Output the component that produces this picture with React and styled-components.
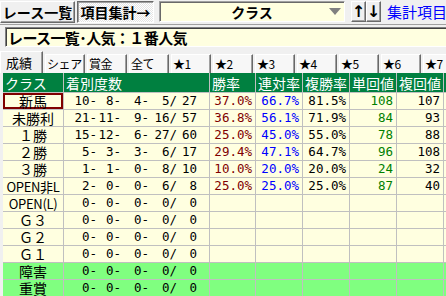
import React from 'react';
import styled, { createGlobalStyle, css } from 'styled-components';

const GlobalStyle = createGlobalStyle`
  html, body { margin: 0; padding: 0; background: #f0f0f0; }
  body { font-family: "Noto Sans CJK JP", sans-serif; }
`;

const CJK = `"Noto Sans CJK JP", "Noto Sans", sans-serif`;
const MONO = `"DejaVu Sans Mono", "Noto Sans CJK JP", monospace`;

const Window = styled.div`
  width: 446px;
  height: 296px;
  overflow: hidden;
  background: #f0f0f0;
  display: flex;
  flex-direction: column;
`;

const Toolbar = styled.div`
  box-sizing: border-box;
  height: 25px;
  padding-top: 1px;
  display: flex;
  align-items: flex-start;
  border-bottom: 1px solid #a0a0a0;
  flex: none;
  white-space: nowrap;
`;

const raised = css`
  border: 1px solid;
  border-color: #ffffff #696969 #696969 #ffffff;
  box-shadow: inset -1px -1px 0 #a0a0a0;
  background: #f0f0f0;
`;

const ToolButton = styled.div`
  box-sizing: border-box;
  flex: none;
  width: ${p => p.$w}px;
  margin-left: ${p => p.$ml || 0}px;
  height: 22px;
  display: flex;
  align-items: center;
  justify-content: center;
  font-family: ${CJK};
  font-weight: 700;
  font-size: 14px;
  line-height: 1;
  color: #000;
  ${raised}
  ${p => p.$pressed && css`
    border-color: #696969 #ffffff #ffffff #696969;
    box-shadow: inset 1px 1px 0 #a0a0a0;
    background: repeating-conic-gradient(#ffffff 0 25%, #e4e4e4 0 50%) 0 0 / 2px 2px;
  `}
`;

const Combo = styled.div`
  box-sizing: border-box;
  flex: none;
  margin-left: 5px;
  width: 186px;
  height: 21px;
  display: flex;
  align-items: center;
  background: #ffffe0;
  border: 1px solid;
  border-color: #a0a0a0 #ffffff #ffffff #a0a0a0;
  box-shadow: inset 1px 1px 0 #696969;
`;

const ComboLabel = styled.span`
  flex: 1;
  padding-left: 15px;
  text-align: center;
  font-family: ${CJK};
  font-weight: 700;
  font-size: 14px;
  line-height: 1;
  color: #000;
`;

const ComboArrow = styled.span`
  flex: none;
  width: 0;
  height: 0;
  margin-right: 3px;
  border-left: 6px solid transparent;
  border-right: 6px solid transparent;
  border-top: 7px solid #808080;
`;

const ArrowButton = styled.div`
  box-sizing: border-box;
  flex: none;
  width: 15px;
  height: 21px;
  margin-left: ${p => p.$ml || 0}px;
  display: flex;
  align-items: center;
  justify-content: center;
  font-family: "DejaVu Sans", sans-serif;
  font-weight: 700;
  font-size: 16px;
  line-height: 1;
  color: #000;
  ${raised}
`;

const MenuLink = styled.span`
  flex: none;
  margin-left: 6px;
  line-height: 21px;
  font-family: ${CJK};
  font-size: 15px;
  color: #0000ff;
`;

const TitleBox = styled.div`
  box-sizing: border-box;
  flex: none;
  margin: 2px 0 0 5px;
  width: 460px;
  height: 20px;
  padding-left: 2px;
  display: flex;
  align-items: center;
  background: #ffffe0;
  border: 1px solid;
  border-color: #808080 #ffffff #ffffff #808080;
  box-shadow: inset 1px 1px 0 #404040;
  font-family: ${CJK};
  font-weight: 700;
  font-size: 15px;
  line-height: 1;
  letter-spacing: -0.6px;
  color: #000;
  white-space: nowrap;
`;

const TabBar = styled.div`
  flex: none;
  margin-top: 4px;
  height: 22px;
  display: flex;
  align-items: flex-end;
  white-space: nowrap;
`;

const Tab = styled.div`
  box-sizing: border-box;
  flex: none;
  width: 40px;
  height: 19px;
  margin-left: 2px;
  padding-left: 1px;
  display: flex;
  align-items: center;
  background: #f7f7f7;
  border: 1px solid;
  border-bottom: none;
  border-color: #ffffff #696969 transparent #ffffff;
  box-shadow: inset -1px 0 0 #a0a0a0;
  font-family: ${CJK};
  font-size: 12px;
  line-height: 1;
  letter-spacing: -0.4px;
  color: #000;
  ${p => p.$active && css`
    width: 43px;
    height: 22px;
    margin-left: 0;
    padding-left: 5px;
    font-size: 13px;
    letter-spacing: 0;
    background: #f0f0f0;
  `}
`;

const Grid = styled.div`
  flex: none;
  margin-left: 3px;
  width: max-content;
  display: grid;
  grid-template-columns: 60px 145px 45px 46px 46px 46px 46px 60px;
  grid-template-rows: 19px;
  grid-auto-rows: 16px;
  gap: 1px;
  background: #c0c0c0;
`;

const HeadCell = styled.div`
  background: #008040;
  color: #ffffff;
  font-family: ${CJK};
  font-size: 14px;
  line-height: 1;
  padding-left: 2px;
  display: flex;
  align-items: center;
  white-space: nowrap;
`;

const Cell = styled.div`
  box-sizing: border-box;
  background: ${p => (p.$tone === 'green' ? '#80ff80' : '#ffffe0')};
  display: flex;
  align-items: center;
  line-height: 1;
  white-space: pre;
`;

const ClassCell = styled(Cell)`
  justify-content: center;
  font-family: ${CJK};
  font-size: ${p => (p.$compact ? 13 : 14)}px;
  letter-spacing: ${p => (p.$compact ? '-0.3px' : '0')};
  color: #000;
  ${p => p.$selected && css`box-shadow: inset 0 0 0 2px #800000;`}
`;

const RecordCell = styled(Cell)`
  font-family: ${MONO};
  font-size: 12.5px;
  color: #000;
`;

const Field = styled.span`
  display: inline-block;
  width: ${p => p.$w}px;
  text-align: right;
`;

const NumCell = styled(Cell)`
  justify-content: flex-end;
  padding-right: 3px;
  font-family: ${MONO};
  font-size: 12.5px;
  color: ${p => p.$color || '#000'};
`;

const FIELD_W = [33, 24, 28, 28, 20];

const rows = [
  { name: '新馬', rec: ['10-', '8-', '4-', '5/', '27'], w: '37.0%', r: '66.7%', f: '81.5%', t: '108', h: '107', sel: true },
  { name: '未勝利', rec: ['21-', '11-', '9-', '16/', '57'], w: '36.8%', r: '56.1%', f: '71.9%', t: '84', h: '93' },
  { name: '１勝', rec: ['15-', '12-', '6-', '27/', '60'], w: '25.0%', r: '45.0%', f: '55.0%', t: '78', h: '88' },
  { name: '２勝', rec: ['5-', '3-', '3-', '6/', '17'], w: '29.4%', r: '47.1%', f: '64.7%', t: '96', h: '108' },
  { name: '３勝', rec: ['1-', '1-', '0-', '8/', '10'], w: '10.0%', r: '20.0%', f: '20.0%', t: '24', h: '32' },
  { name: 'OPEN非L', rec: ['2-', '0-', '0-', '6/', '8'], w: '25.0%', r: '25.0%', f: '25.0%', t: '87', h: '40', compact: true },
  { name: 'OPEN(L)', rec: ['0-', '0-', '0-', '0/', '0'], compact: true },
  { name: 'Ｇ３', rec: ['0-', '0-', '0-', '0/', '0'] },
  { name: 'Ｇ２', rec: ['0-', '0-', '0-', '0/', '0'] },
  { name: 'Ｇ１', rec: ['0-', '0-', '0-', '0/', '0'] },
  { name: '障害', rec: ['0-', '0-', '0-', '0/', '0'], tone: 'green' },
  { name: '重賞', rec: ['0-', '0-', '0-', '0/', '0'], tone: 'green' },
];

const tabs = ['成績', 'シェア', '賞金', '全て', '★1', '★2', '★3', '★4', '★5', '★6', '★7'];
const heads = ['クラス', '着別度数', '勝率', '連対率', '複勝率', '単回値', '複回値', ''];

export default function App() {
  return (
    <Window>
      <GlobalStyle />
      <Toolbar>
        <ToolButton $w={75}>レース一覧</ToolButton>
        <ToolButton $w={77} $ml={2} $pressed>項目集計→</ToolButton>
        <Combo>
          <ComboLabel>クラス</ComboLabel>
          <ComboArrow />
        </Combo>
        <ArrowButton $ml={6}>↑</ArrowButton>
        <ArrowButton>↓</ArrowButton>
        <MenuLink>集計項目メニュー</MenuLink>
      </Toolbar>
      <TitleBox>レース一覧･人気：１番人気</TitleBox>
      <TabBar>
        {tabs.map((t, i) => (
          <Tab key={t} $active={i === 0}>{t}</Tab>
        ))}
      </TabBar>
      <Grid>
        {heads.map((h, i) => (
          <HeadCell key={i}>{h}</HeadCell>
        ))}
        {rows.map(row => (
          <React.Fragment key={row.name}>
            <ClassCell $tone={row.tone} $compact={row.compact} $selected={row.sel}>{row.name}</ClassCell>
            <RecordCell $tone={row.tone}>
              {row.rec.map((v, i) => (
                <Field key={i} $w={FIELD_W[i]}>{v}</Field>
              ))}
            </RecordCell>
            <NumCell $tone={row.tone} $color="#800000">{row.w || ''}</NumCell>
            <NumCell $tone={row.tone} $color="#0000ff">{row.r || ''}</NumCell>
            <NumCell $tone={row.tone}>{row.f || ''}</NumCell>
            <NumCell $tone={row.tone} $color="#008000">{row.t || ''}</NumCell>
            <NumCell $tone={row.tone}>{row.h || ''}</NumCell>
            <NumCell $tone={row.tone} />
          </React.Fragment>
        ))}
      </Grid>
    </Window>
  );
}
